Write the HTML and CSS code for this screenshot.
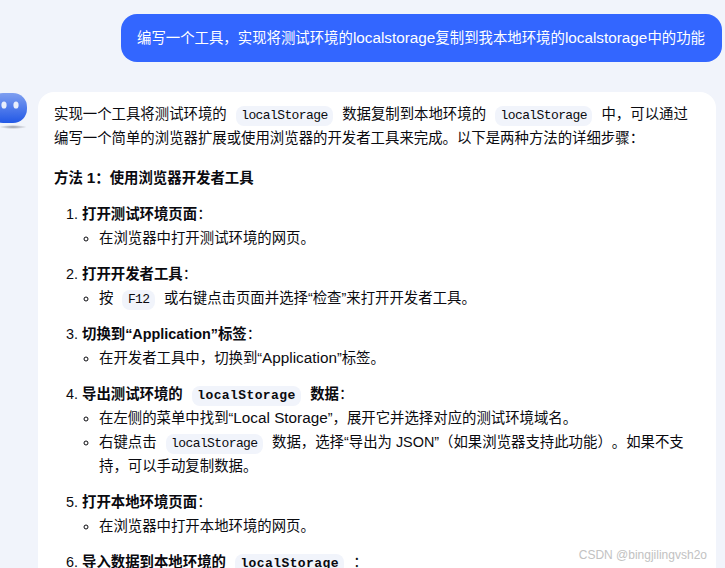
FILE: index.html
```html
<!DOCTYPE html>
<html lang="zh">
<head>
<meta charset="utf-8">
<title>localStorage</title>
<link rel="stylesheet" href="styles.css">
</head>
<body>
<main class="chat">
  <div class="user-row">
    <div class="user-bubble">编写一个工具，实现将测试环境的<span class="en">localstorage</span>复制到我本地环境的<span class="en">localstorage</span>中的功能</div>
  </div>
  <div class="bot-row">
    <svg class="avatar" viewBox="0 0 38 44" aria-hidden="true">
      <defs>
        <linearGradient id="g" x1="0" y1="0" x2="0" y2="1">
          <stop offset="0" stop-color="#7f9ff0"/>
          <stop offset="1" stop-color="#2258e6"/>
        </linearGradient>
        <radialGradient id="s">
          <stop offset="0" stop-color="#9a9da6"/>
          <stop offset="1" stop-color="#f1f4fb"/>
        </radialGradient>
      </defs>
      <rect x="0" y="1" width="38" height="30" rx="14" fill="url(#g)"/>
      <ellipse cx="15" cy="13" rx="2.6" ry="3.6" fill="#e9effc"/>
      <ellipse cx="27" cy="13" rx="2.6" ry="3.6" fill="#e9effc"/>
      <ellipse cx="24" cy="35" rx="14" ry="2" fill="url(#s)"/>
    </svg>
    <article class="answer">
      <p class="para">实现一个工具将测试环境的<code>localStorage</code>数据复制到本地环境的<code>localStorage</code>中，可以通过编写一个简单的浏览器扩展或使用浏览器的开发者工具来完成。以下是两种方法的详细步骤：</p>
      <p class="heading"><strong>方法 <span class="en">1</span>：使用浏览器开发者工具</strong></p>
      <ol class="steps">
        <li><strong>打开测试环境页面</strong>：
          <ul><li>在浏览器中打开测试环境的网页。</li></ul>
        </li>
        <li><strong>打开开发者工具</strong>：
          <ul><li>按<code>F12</code>或右键点击页面并选择“检查”来打开开发者工具。</li></ul>
        </li>
        <li><strong>切换到“Application”标签</strong>：
          <ul><li>在开发者工具中，切换到“<span class="en">Application</span>”标签。</li></ul>
        </li>
        <li><strong>导出测试环境的<code>localStorage</code>数据</strong>：
          <ul>
            <li>在左侧的菜单中找到“<span class="en">Local Storage</span>”，展开它并选择对应的测试环境域名。</li>
            <li>右键点击<code>localStorage</code>数据，选择“导出为 JSON”（如果浏览器支持此功能）。如果不支持，可以手动复制数据。</li>
          </ul>
        </li>
        <li><strong>打开本地环境页面</strong>：
          <ul><li>在浏览器中打开本地环境的网页。</li></ul>
        </li>
        <li><strong>导入数据到本地环境的<code>localStorage</code></strong>：</li>
      </ol>
    </article>
  </div>
</main>
<div class="watermark">CSDN @bingjilingvsh2o</div>
</body>
</html>
```

FILE: styles.css
```css
* { box-sizing: border-box; }
html, body { height: 100%; }
body {
  margin: 0;
  height: 568px;
  overflow: hidden;
  position: relative;
  background: #f1f4fb;
  color: #0a0a0f;
  font: 14.4px/24px "Liberation Sans", "Noto Sans CJK SC", sans-serif;
  text-spacing-trim: space-all;
}
.en { font-size: 15.3px; }
.chat { padding: 14px 3px 0 0; display: flex; flex-direction: column; gap: 30px; }
.user-row { display: flex; justify-content: flex-end; }
.user-bubble {
  width: 601px;
  height: 48px;
  padding: 12px 16px;
  border-radius: 16px;
  background: #3366ff;
  color: #fff;
  white-space: nowrap;
}
.bot-row { display: flex; align-items: flex-start; margin-left: -11px; padding-right: 6px; gap: 11px; }
.avatar { width: 38px; height: 44px; flex: none; filter: blur(0.5px); }
.answer {
  flex: 1;
  padding: 10px 16px 20px;
  background: #fff;
  border-radius: 16px;
  min-height: 600px;
}
.para { margin: 0 0 16px; }
.heading { margin: 0 0 12px; }
strong { font-weight: 700; }
code {
  display: inline-block;
  margin: 0 9px;
  padding: 0 5.5px;
  height: 20px;
  border-radius: 8px;
  background: #f1f4fb;
  font: 13px/20px "Liberation Mono", monospace;
  letter-spacing: -0.6px;
}
strong code { font-weight: 700; letter-spacing: 0.4px; }
.steps { margin: 0; padding: 0 0 0 28px; }
.steps > li { margin-bottom: 12px; }
.steps ul { margin: 0; padding: 0 0 0 17px; list-style: circle; }
.watermark {
  position: absolute;
  right: 18px;
  top: 545px;
  font: 12px/20px "Liberation Sans", sans-serif;
  color: #c2c2c2;
}
```
